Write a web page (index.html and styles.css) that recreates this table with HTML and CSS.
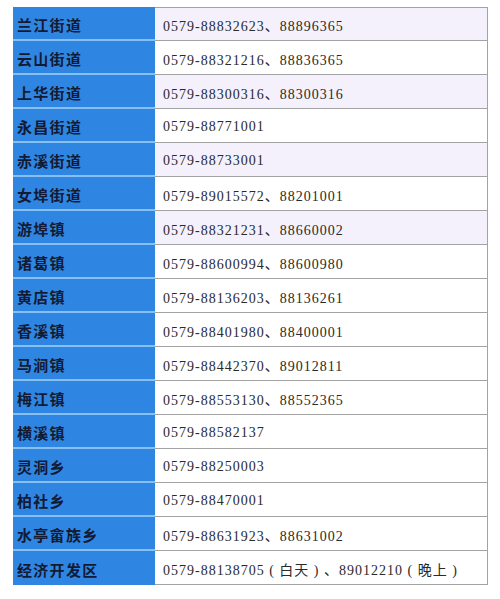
FILE: index.html
```
<!DOCTYPE html>
<html lang="zh">
<head>
<meta charset="utf-8">
<link rel="stylesheet" href="styles.css">
</head>
<body>
<div class="table">
  <div class="row alt"><div class="name">兰江街道</div><div class="tel">0579-88832623、88896365</div></div>
  <div class="row"><div class="name">云山街道</div><div class="tel">0579-88321216、88836365</div></div>
  <div class="row alt"><div class="name">上华街道</div><div class="tel">0579-88300316、88300316</div></div>
  <div class="row"><div class="name">永昌街道</div><div class="tel">0579-88771001</div></div>
  <div class="row alt"><div class="name">赤溪街道</div><div class="tel">0579-88733001</div></div>
  <div class="row"><div class="name">女埠街道</div><div class="tel">0579-89015572、88201001</div></div>
  <div class="row alt"><div class="name">游埠镇</div><div class="tel">0579-88321231、88660002</div></div>
  <div class="row"><div class="name">诸葛镇</div><div class="tel">0579-88600994、88600980</div></div>
  <div class="row"><div class="name">黄店镇</div><div class="tel">0579-88136203、88136261</div></div>
  <div class="row"><div class="name">香溪镇</div><div class="tel">0579-88401980、88400001</div></div>
  <div class="row"><div class="name">马涧镇</div><div class="tel">0579-88442370、89012811</div></div>
  <div class="row"><div class="name">梅江镇</div><div class="tel">0579-88553130、88552365</div></div>
  <div class="row"><div class="name">横溪镇</div><div class="tel">0579-88582137</div></div>
  <div class="row"><div class="name">灵洞乡</div><div class="tel">0579-88250003</div></div>
  <div class="row"><div class="name">柏社乡</div><div class="tel">0579-88470001</div></div>
  <div class="row"><div class="name">水亭畲族乡</div><div class="tel">0579-88631923、88631002</div></div>
  <div class="row"><div class="name">经济开发区</div><div class="tel">0579-88138705&nbsp;(&nbsp;白天&nbsp;)&nbsp;、89012210&nbsp;(&nbsp;晚上&nbsp;)</div></div>
</div>
</body>
</html>
```
FILE: styles.css
```
html, body {
  margin: 0;
  padding: 0;
  background: #ffffff;
}
.table {
  margin: 7px 0 0 13px;
  width: 475px;
  display: flex;
  flex-direction: column;
}
.row {
  display: flex;
  height: 34px;
}
.name {
  width: 142px;
  box-sizing: border-box;
  background: #2f86e2;
  border-bottom: 2px solid #86bff2;
  padding-left: 4px;
  padding-top: 2px;
  display: flex;
  align-items: center;
  font-family: "Noto Sans CJK SC", sans-serif;
  font-weight: bold;
  font-size: 15px;
  letter-spacing: 1.3px;
  color: #131a33;
}
.tel {
  flex: 1;
  box-sizing: border-box;
  border-bottom: 1px solid #a3a3a3;
  border-right: 1px solid #a3a3a3;
  padding-left: 8px;
  padding-top: 2px;
  display: flex;
  align-items: center;
  font-family: "Liberation Serif", "Noto Sans CJK SC", serif;
  font-size: 14px;
  letter-spacing: 1px;
  color: #2a2a2a;
}
.row:first-child .tel {
  border-top: 1px solid #a3a3a3;
}
.row:last-child .name {
  border-bottom: none;
}
.alt .tel {
  background: #f4f1fc;
}
```
